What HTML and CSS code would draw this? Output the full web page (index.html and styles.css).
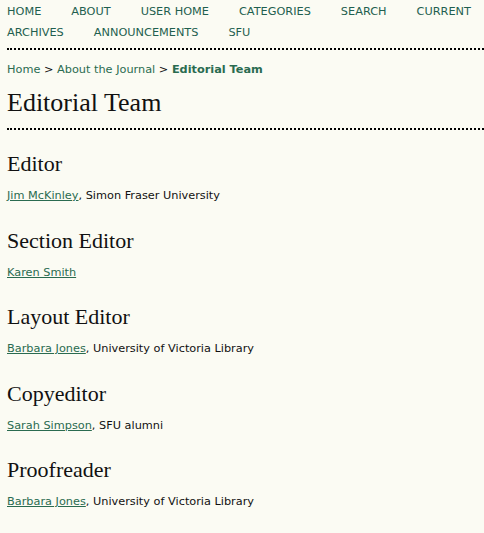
FILE: index.html
```html
<!DOCTYPE html>
<html lang="en">
<head>
    <meta charset="UTF-8">
    <title>Editorial Team</title>
    <link rel="stylesheet" href="styles.css">
</head>
<body>
    <div class="navbar">
        <ul class="menu">
            <li><a href="#">Home</a></li>
            <li><a href="#">About</a></li>
            <li><a href="#">User Home</a></li>
            <li><a href="#">Categories</a></li>
            <li><a href="#">Search</a></li>
            <li><a href="#">Current</a></li>
            <li><a href="#">Archives</a></li>
            <li><a href="#">Announcements</a></li>
            <li><a href="#">SFU</a></li>
        </ul>
    </div>

    <div class="breadcrumb">
        <a href="#">Home</a> &gt;
        <a href="#">About the Journal</a> &gt;
        <a href="#" class="current">Editorial Team</a>
    </div>

    <h2 class="page-title">Editorial Team</h2>

    <div class="content">
        <div class="group">
            <h4>Editor</h4>
            <p><a href="#">Jim McKinley</a>, Simon Fraser University</p>
        </div>
        <div class="group">
            <h4>Section Editor</h4>
            <p><a href="#">Karen Smith</a></p>
        </div>
        <div class="group">
            <h4>Layout Editor</h4>
            <p><a href="#">Barbara Jones</a>, University of Victoria Library</p>
        </div>
        <div class="group">
            <h4>Copyeditor</h4>
            <p><a href="#">Sarah Simpson</a>, SFU alumni</p>
        </div>
        <div class="group">
            <h4>Proofreader</h4>
            <p><a href="#">Barbara Jones</a>, University of Victoria Library</p>
        </div>
    </div>
</body>
</html>
```

FILE: styles.css
```css
* {
    margin: 0;
    padding: 0;
    box-sizing: border-box;
}

body {
    background-color: #fbfbf3;
    font-family: "DejaVu Sans", Verdana, sans-serif;
    font-size: 11.3px;
    color: #111;
    padding: 0 0 0 7px;
}

a {
    color: #2a6b50;
}

.navbar {
    border-bottom: 2px dotted #000;
    padding: 1px 0 5px;
}

.menu {
    list-style: none;
    display: flex;
    flex-wrap: wrap;
    column-gap: 30px;
    line-height: 21px;
}

.menu a {
    text-decoration: none;
    text-transform: uppercase;
    color: #1f5f4f;
}

.breadcrumb {
    margin-top: 13px;
    line-height: 14px;
}

.breadcrumb a {
    text-decoration: none;
}

.breadcrumb .current {
    font-weight: bold;
}

.page-title {
    font-family: "Liberation Serif", Georgia, serif;
    font-weight: normal;
    font-size: 26px;
    line-height: 30px;
    color: #111;
    padding: 11px 0 10px;
    border-bottom: 2px dotted #000;
}

.content {
    padding-top: 21px;
}

.group {
    margin-bottom: 24.5px;
}

.group h4 {
    font-family: "Liberation Serif", Georgia, serif;
    font-weight: normal;
    font-size: 22px;
    line-height: 26px;
    color: #111;
    margin-bottom: 12px;
}

.group p {
    line-height: 14px;
}
```
